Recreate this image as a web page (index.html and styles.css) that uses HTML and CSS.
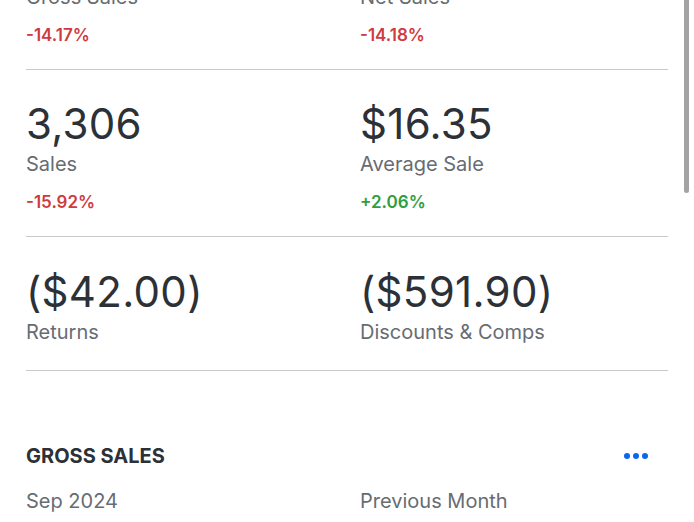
FILE: index.html
```html
<!DOCTYPE html>
<html lang="en">
<head>
  <meta charset="UTF-8">
  <meta name="viewport" content="width=device-width, initial-scale=1.0">
  <title>Sales Summary</title>
  <link rel="stylesheet" href="styles.css">
</head>
<body>
  <div class="scrollbar"></div>

  <div class="page">
    <!-- Key metrics -->
    <div class="metrics">
      <div class="row">
        <div class="metric">
          <div class="value">$59,624.88</div>
          <div class="label">Gross Sales</div>
          <div class="change down">-14.17%</div>
        </div>
        <div class="metric">
          <div class="value">$54,049.08</div>
          <div class="label">Net Sales</div>
          <div class="change down">-14.18%</div>
        </div>
      </div>

      <div class="row">
        <div class="metric">
          <div class="value">3,306</div>
          <div class="label">Sales</div>
          <div class="change down">-15.92%</div>
        </div>
        <div class="metric">
          <div class="value">$16.35</div>
          <div class="label">Average Sale</div>
          <div class="change up">+2.06%</div>
        </div>
      </div>

      <div class="row">
        <div class="metric">
          <div class="value">($42.00)</div>
          <div class="label">Returns</div>
        </div>
        <div class="metric">
          <div class="value">($591.90)</div>
          <div class="label">Discounts &amp; Comps</div>
        </div>
      </div>
    </div>

    <!-- Gross sales chart header -->
    <div class="section">
      <div class="section-head">
        <h2>GROSS SALES</h2>
        <button class="more" aria-label="More">
          <span></span><span></span><span></span>
        </button>
      </div>
      <div class="legend">
        <div>Sep 2024</div>
        <div>Previous Month</div>
      </div>
    </div>
  </div>
</body>
</html>
```

FILE: styles.css
```css
/* Base */
body {
  margin: 0;
  font-family: 'Inter', 'Liberation Sans', sans-serif;
  background-color: #fff;
  color: #2c3137;
  overflow: hidden;
}

.page {
  padding: 0 26px;
}

/* Metrics grid */
.metrics {
  margin-top: -97px;
}

.row {
  display: grid;
  grid-template-columns: 1fr 1fr;
  column-gap: 26px;
  padding: 29px 0 25px;
  border-bottom: 1px solid #c9c9c9;
}

.row:last-child {
  padding-top: 30px;
  padding-bottom: 26px;
}

.value {
  font-size: 42px;
  line-height: 50px;
  letter-spacing: 0.3px;
  color: #2c3137;
}

.label {
  margin-top: 3px;
  font-size: 20px;
  line-height: 24px;
  color: #676c72;
}

.change {
  margin-top: 17px;
  font-size: 17px;
  font-weight: 600;
  line-height: 18px;
}

.down {
  color: #cf3a40;
}

.up {
  color: #2e9f40;
}

/* Section */
.section {
  padding-top: 73px;
}

.section-head {
  display: flex;
  align-items: center;
  justify-content: space-between;
}

.section-head h2 {
  margin: 0;
  font-size: 20px;
  font-weight: 700;
  line-height: 24px;
  color: #2c3137;
}

.more {
  display: flex;
  gap: 3px;
  padding: 0;
  margin-right: 20px;
  border: none;
  background: none;
}

.more span {
  width: 6px;
  height: 6px;
  border-radius: 50%;
  background-color: #0a66f0;
}

.legend {
  display: grid;
  grid-template-columns: 1fr 1fr;
  column-gap: 26px;
  margin-top: 21px;
  font-size: 20px;
  line-height: 24px;
  color: #676c72;
}

/* Scroll indicator */
.scrollbar {
  position: absolute;
  top: -40px;
  left: 684px;
  width: 5px;
  height: 233px;
  border-radius: 3px;
  background-color: #a3a3a3;
}
```
